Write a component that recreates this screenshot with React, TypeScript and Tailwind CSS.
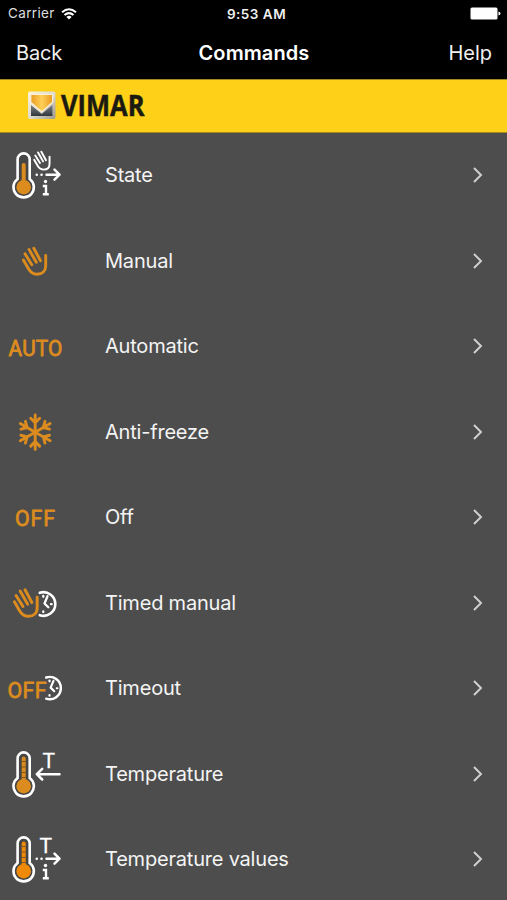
import type { ReactNode } from 'react';

const ORANGE = '#dc8c1e';

function Hand({ color = ORANGE, width = 2.9 }: { color?: string; width?: number }) {
  return (
    <g fill="none" stroke={color} strokeWidth={width} strokeLinecap="round" strokeLinejoin="round">
      <path d="M1.4 13L6 21C8.300 25.200 11 27.300 15 27.300C20.300 27.300 23.700 24 23.700 18.800V8.500" />
      <path d="M3 6.800L9.800 17.700" />
      <path d="M7 2.400L14.300 15.300" />
      <path d="M11.800 1.300L18.500 13.700" />
    </g>
  );
}

function Thermometer({ ticks = false, fill = ORANGE }: { ticks?: boolean; fill?: string }) {
  return (
    <g>
      <path
        d="M17.600 34V14.400a6.050 6.050 0 0 1 12.100 0V34a10.200 10.200 0 1 1-12.100 0Z"
        fill="#464646"
        stroke="#fff"
        strokeWidth="2.6"
      />
      <circle cx="23.7" cy="42.2" r="7.3" fill={fill} />
      <path d={ticks ? 'M23.700 14.500V38' : 'M23.700 20V38'} stroke={fill} strokeWidth="4" strokeLinecap="round" />
      {ticks && <path d="M21.700 17.500h4M21.700 23h4M21.700 28.500h4M21.700 33.500h4" stroke="#7d5722" strokeWidth="1.1" />}
    </g>
  );
}

function ArrowRight() {
  return (
    <g fill="none" stroke="#fff" strokeWidth="2.5" strokeLinecap="round" strokeLinejoin="round">
      <path d="M36.700 29.700h.1M41.500 29.700h.1" />
      <path d="M46.500 29.700H59.500M54.500 24.700L59.500 29.700L54.500 34.700" />
    </g>
  );
}

function Info() {
  return (
    <g fill="none" stroke="#fff" strokeWidth="2.4">
      <circle cx="45.500" cy="36.500" r="1.700" fill="#fff" stroke="none" />
      <path d="M42.800 41H46V49M42.800 49.200H48.800" />
    </g>
  );
}

function LetterT({ x, y }: { x: number; y: number }) {
  return (
    <text x={x} y={y} textAnchor="middle" fill="#fff" stroke="#fff" strokeWidth=".3" fontSize="21" className="font-['Roboto',sans-serif]">
      T
    </text>
  );
}

function HalfClock() {
  return (
    <g fill="none" stroke="#fff" strokeLinecap="round" strokeLinejoin="round">
      <path d="M39.800 19.800A11.800 11.800 0 1 1 39.800 42.200" strokeWidth="2.6" />
      <path d="M47.500 23.300L44.500 30.500L48.300 34.300" strokeWidth="2.300" />
      <path d="M43.300 23v.8M51 31.200h.6M43.300 38.300v.8" strokeWidth="2.300" />
    </g>
  );
}

function Snowflake() {
  return (
    <g fill="none" stroke={ORANGE} strokeWidth="2.9" strokeLinecap="round" strokeLinejoin="round">
      {[0, 60, 120, 180, 240, 300].map((angle) => (
        <path key={angle} d="M35.200 30.200V13M30.700 16.300L35.200 20.800L39.700 16.300" transform={`rotate(${angle} 35.200 30.200)`} />
      ))}
    </g>
  );
}

// The glyphs are narrowed by `squeeze`; the letters then spread out over `width`.
function Word({ children, x, y, width, size, squeeze = 0.93 }: {
  children: string; x: number; y: number; width: number; size: number; squeeze?: number;
}) {
  return (
    <text
      transform={`translate(${x} ${y}) scale(${squeeze} 1)`}
      fontSize={size} textLength={width / squeeze}
      fill={ORANGE} stroke={ORANGE} strokeWidth="0.8" strokeLinejoin="round"
      className="font-['Roboto',sans-serif]"
    >
      {children}
    </text>
  );
}

const COMMANDS: Array<{ label: string; icon: ReactNode }> = [
  {
    label: 'State',
    icon: (
      <>
        <Thermometer />
        <g transform="translate(33.200 5.800) scale(.69)"><Hand color="#fff" width={2.8} /></g>
        <ArrowRight />
        <Info />
      </>
    ),
  },
  { label: 'Manual', icon: <g transform="translate(22 16)"><Hand /></g> },
  { label: 'Automatic', icon: <Word x={8.6} y={39.5} width={53.6} size={21.5} squeeze={0.97}>AUTO</Word> },
  { label: 'Anti-freeze', icon: <Snowflake /> },
  { label: 'Off', icon: <Word x={15} y={39} width={39.8} size={23}>OFF</Word> },
  {
    label: 'Timed manual',
    icon: (
      <>
        <HalfClock />
        <g transform="translate(13 15.500) scale(1.02)"><Hand /></g>
      </>
    ),
  },
  {
    label: 'Timeout',
    icon: (
      <>
        <g transform="translate(8.600 .8) scale(.945)"><HalfClock /></g>
        <Word x={7.5} y={39.5} width={39} size={23}>OFF</Word>
      </>
    ),
  },
  {
    label: 'Temperature',
    icon: (
      <>
        <Thermometer ticks />
        <LetterT x={48.7} y={24.2} />
        <path d="M59.500 30.200H37M42.200 24.900L36.800 30.200L42.200 35.500" fill="none" stroke="#fff" strokeWidth="2.5" strokeLinecap="round" strokeLinejoin="round" />
      </>
    ),
  },
  {
    label: 'Temperature values',
    icon: (
      <>
        <Thermometer ticks fill="#ee8a08" />
        <LetterT x={45.7} y={23.9} />
        <ArrowRight />
        <Info />
      </>
    ),
  },
];

function StatusBar() {
  return (
    <div className="grid h-[27px] grid-cols-3 items-center pl-2 pr-[6px] text-[13.5px] text-[#dedede]">
      <div className="flex items-center gap-[6px]">
        <span className="tracking-[0.35px]">Carrier</span>
        <svg width="16" height="12" viewBox="0 0 16 12" fill="none" stroke="#fff" strokeWidth="2">
          <path d="M1 4.200Q8-1.800 15 4.200M3.500 7Q8 3.200 12.500 7" />
          <path d="M8 11.500L5.400 8.900Q8 6.800 10.600 8.900Z" fill="#fff" stroke="none" />
        </svg>
      </div>
      <span className="pl-1 pt-px text-center text-[13.5px] font-semibold tracking-[0.5px] text-[#f0f0f0]">9:53 AM</span>
      <svg className="justify-self-end" width="31" height="13" viewBox="0 0 31 13" fill="#fff">
        <rect x=".5" y=".5" width="27" height="12" rx="1.500" />
        <path d="M28.500 4.500Q30.500 5 30.500 6.500T28.500 8.500Z" />
      </svg>
    </div>
  );
}

function Brand() {
  return (
    <div className="flex h-[54px] items-center border-y border-[#a58a20] bg-[#ffd018] pl-[27px]">
      <svg width="150" height="44" viewBox="0 -6 150 44">
        <defs>
          <linearGradient id="frame" x1="0" y1="0" x2="1" y2="1">
            <stop offset="0" stopColor="#fff6d8" />
            <stop offset=".5" stopColor="#dedbd2" />
            <stop offset="1" stopColor="#9c978b" />
          </linearGradient>
          <linearGradient id="shield" x1="0" y1="0" x2="1" y2="0">
            <stop offset="0" stopColor="#e99b20" />
            <stop offset=".5" stopColor="#ffcf57" />
            <stop offset="1" stopColor="#e89a20" />
          </linearGradient>
          <linearGradient id="base" x1="0" y1="0" x2="0" y2="1">
            <stop offset="0" stopColor="#7c8187" />
            <stop offset="1" stopColor="#30363b" />
          </linearGradient>
        </defs>
        <rect x="1" y="1.500" width="27.500" height="27.500" rx="2" fill="url(#frame)" />
        <path d="M4 15L14.700 24L25.400 15V26H4Z" fill="url(#base)" />
        <path d="M3.800 4.500H25.600V12.200L14.700 22L3.800 12.200Z" fill="url(#shield)" stroke="#f8f0dc" strokeWidth="1.200" />
        <text
          x="34" y="26" fontSize="29" textLength="83.500" lengthAdjust="spacingAndGlyphs"
          fill="#1b1a12" stroke="#1b1a12" strokeWidth=".5" className="font-['Open_Sans',sans-serif] font-bold"
        >
          VIMAR
        </text>
      </svg>
    </div>
  );
}

export default function App() {
  return (
    <div className="h-[900px] w-[507px] overflow-hidden bg-[#4d4d4d] font-['Inter','Liberation_Sans',sans-serif]">
      <header className="h-[79px] bg-black text-[#f0f0f0]">
        <StatusBar />
        <nav className="grid h-[51px] grid-cols-3 items-center pl-4 pr-[15px] text-[20px]">
          <button className="text-left tracking-[-0.2px]">Back</button>
          <h1 className="text-center text-[20px] font-semibold tracking-[0.1px] text-white">Commands</h1>
          <button className="text-right">Help</button>
        </nav>
      </header>
      <Brand />
      <ul className="-mt-[0.5px]">
        {COMMANDS.map(({ label, icon }) => (
          <li key={label} className="flex h-[85.5px] items-center pr-[23px] text-[20px] tracking-[-0.2px] text-[#f4f4f4]">
            <svg className="mr-[35px] shrink-0" width="70" height="60" viewBox="0 0 70 60">{icon}</svg>
            <span className="flex-1">{label}</span>
            <svg width="12" height="18" viewBox="0 0 12 18" fill="none" stroke="#cfcfcf" strokeWidth="2">
              <path d="M2 2L9 9L2 16" />
            </svg>
          </li>
        ))}
      </ul>
    </div>
  );
}
